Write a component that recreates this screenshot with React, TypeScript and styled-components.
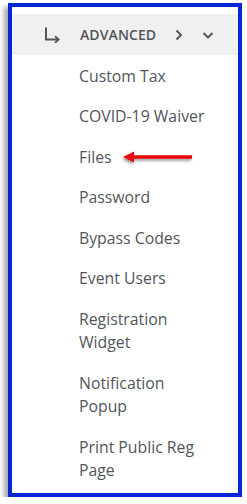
import { createGlobalStyle, styled } from "styled-components";

const Global = createGlobalStyle`
  html, body {
    margin: 0;
    padding: 0;
    background: #fff;
  }
  body {
    font-family: "Open Sans", "Liberation Sans", sans-serif;
  }
`;

const Frame = styled.div`
  box-sizing: border-box;
  width: 234px;
  height: 494px;
  margin: 3px 0 0 8px;
  border: 4px solid #0527d6;
  background: #fff;
  padding-top: 7px;
  box-shadow: -4px 4px 5px rgba(0, 0, 0, 0.35);
  overflow: hidden;
`;

const Header = styled.div`
  height: 41px;
  background: #f0f0f0;
  display: flex;
  align-items: center;
  padding-left: 32px;
  color: #52565c;
`;

const Title = styled.span`
  font-size: 14px;
  font-weight: 600;
  letter-spacing: 0.1px;
  margin-left: 19px;
  margin-right: 17px;
`;

const List = styled.ul`
  list-style: none;
  margin: 0;
  padding: 1px 0 0 67px;
`;

const Item = styled.li`
  position: relative;
  font-size: 15.8px;
  line-height: 23.5px;
  color: #52565c;
  padding: 8.5px 0;
  width: 136px;
`;

const Pointer = styled.svg`
  position: absolute;
  left: 44px;
  top: 14px;
  filter: drop-shadow(-1px 2px 1.5px rgba(0, 0, 0, 0.4));
`;

const SubIcon = () => (
  <svg width="17" height="17" viewBox="0 0 17 17" fill="none">
    <path d="M2 1.5V13.5H14" stroke="#52565c" strokeWidth="2" />
    <path d="M11 10.2L14.6 13.5L11 16.8" stroke="#52565c" strokeWidth="1.8" />
  </svg>
);

const Chevron = ({ down }: { down?: boolean }) => (
  <svg width="12" height="12" viewBox="0 0 12 12" fill="none" style={{ marginRight: down ? 0 : 17 }}>
    <path
      d={down ? "M1.5 4L6 8.5L10.5 4" : "M3.5 1.5L8 6L3.5 10.5"}
      stroke="#52565c"
      strokeWidth="2"
    />
  </svg>
);

const items = [
  "Custom Tax",
  "COVID-19 Waiver",
  "Files",
  "Password",
  "Bypass Codes",
  "Event Users",
  "Registration Widget",
  "Notification Popup",
  "Print Public Reg Page",
];

export default function App() {
  return (
    <>
      <Global />
      <Frame>
        <Header>
          <SubIcon />
          <Title>ADVANCED</Title>
          <Chevron />
          <Chevron down />
        </Header>
        <List>
          {items.map((t) => (
            <Item key={t}>
              {t}
              {t === "Files" && (
                <Pointer width="70" height="12" viewBox="0 0 70 12">
                  <path d="M0 6L11 0.5V4.3H69V7.7H11V11.5Z" fill="#e8080a" />
                </Pointer>
              )}
            </Item>
          ))}
        </List>
      </Frame>
    </>
  );
}
